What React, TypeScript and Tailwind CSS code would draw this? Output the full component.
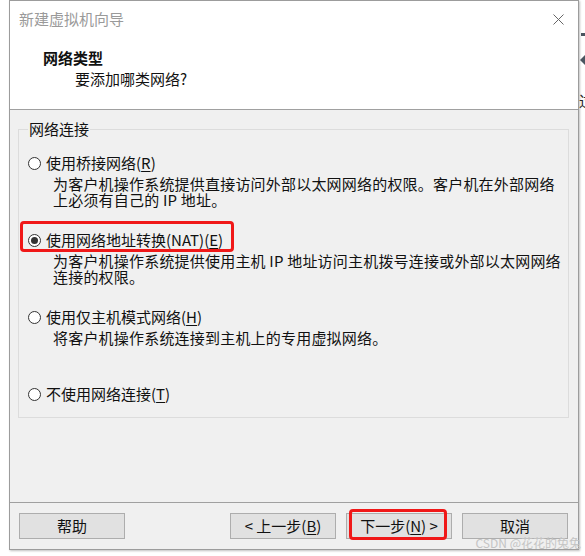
import React from 'react';

const U = ({ k }: { k: string }) => (
  <>
    (<span className="underline underline-offset-2">{k}</span>)
  </>
);

const Radio = ({ checked = false }: { checked?: boolean }) => (
  <span className="w-[13px] h-[13px] rounded-full border border-[#333] bg-white flex items-center justify-center shrink-0">
    {checked && <span className="w-[7px] h-[7px] rounded-full bg-[#333]" />}
  </span>
);

interface OptionProps {
  label: React.ReactNode;
  lines?: string[];
  checked?: boolean;
}

const Option = ({ label, lines = [], checked }: OptionProps) => (
  <div className="h-[77px]">
    <div className="flex items-center gap-[5px] h-[18px] leading-[18px]">
      <Radio checked={checked} />
      <span>{label}</span>
    </div>
    {lines.length > 0 && (
      <div className="mt-[4px] pl-[25px] leading-[16px] whitespace-nowrap tracking-[0.2px]">
        {lines.map((l, i) => (
          <div key={i}>{l}</div>
        ))}
      </div>
    )}
  </div>
);

const Btn = ({ children }: { children: React.ReactNode }) => (
  <div className="w-[106px] h-[26px] bg-[#e1e1e1] border border-[#adadad] flex items-center justify-center leading-[18px]">
    {children}
  </div>
);

export default function App() {
  return (
    <div className="w-[585px] h-[556px] bg-white relative overflow-hidden text-[15px] text-[#111] font-['Noto_Sans_CJK_SC',sans-serif]">
      <div className="ml-[9px] w-[570px] h-[550px] border border-[#9c9c9c] flex flex-col bg-[#f0f0f0] shadow-[1px_1px_2px_rgba(0,0,0,0.25)]">
        {/* header */}
        <div className="h-[109px] bg-white border-b border-[#a0a0a0] shrink-0">
          <div className="h-[36px] flex items-center pl-[9px] pr-[14px]">
            <span className="text-[#9a9a9a]">新建虚拟机向导</span>
            <svg className="ml-auto" width="11" height="11" viewBox="0 0 11 11">
              <path d="M0.5 0.5 L10.5 10.5 M10.5 0.5 L0.5 10.5" stroke="#666" strokeWidth="1" />
            </svg>
          </div>
          <div className="mt-[11px] pl-[33px] leading-[20px] font-bold">网络类型</div>
          <div className="mt-[1px] pl-[65px] leading-[20px]">要添加哪类网络?</div>
        </div>

        {/* body */}
        <div className="flex-1">
          <div className="mt-[19px] ml-[8px] w-[551px] h-[289px] border border-[#dcdcdc] relative pl-[9px] pt-[24px]">
            <span className="absolute left-[9px] top-[-10px] px-[1px] bg-[#f0f0f0] leading-[18px]">网络连接</span>
            <Option
              label={<>使用桥接网络<U k="R" /></>}
              lines={[
                '为客户机操作系统提供直接访问外部以太网网络的权限。客户机在外部网络',
                '上必须有自己的 IP 地址。',
              ]}
            />
            <Option
              checked
              label={<>使用网络地址转换(NAT)<U k="E" /></>}
              lines={[
                '为客户机操作系统提供使用主机 IP 地址访问主机拨号连接或外部以太网网络',
                '连接的权限。',
              ]}
            />
            <Option
              label={<>使用仅主机模式网络<U k="H" /></>}
              lines={['将客户机操作系统连接到主机上的专用虚拟网络。']}
            />
            <Option label={<>不使用网络连接<U k="T" /></>} />
          </div>
        </div>

        {/* footer */}
        <div className="h-[47px] border-t border-[#a0a0a0] shrink-0 flex items-start pt-[10px] pl-[9px] pr-[10px]">
          <Btn>帮助</Btn>
          <div className="ml-auto flex gap-[10px]">
            <Btn>&lt; 上一步<U k="B" /></Btn>
            <Btn>下一步<U k="N" /> &gt;</Btn>
            <Btn>取消</Btn>
          </div>
        </div>
      </div>

      {/* red annotation boxes */}
      <div className="absolute left-[20px] top-[221px] w-[214px] h-[31px] border-[3px] border-[#f01818] rounded-[4px]" />
      <div className="absolute left-[349px] top-[509px] w-[98px] h-[31px] border-[3px] border-[#f01818] rounded-[4px]" />

      {/* bits of the window behind */}
      <div className="absolute left-[581px] top-[33px] w-[4px] h-[3px] bg-[#4a5560]" />
      <svg className="absolute left-[579px] top-[55px]" width="6" height="10" viewBox="0 0 6 10">
        <path d="M6 0 L1 5 L6 10 Z" fill="#4a5560" />
      </svg>
      <span className="absolute left-[579px] top-[92px] text-[15px] leading-[18px] text-[#222]">过</span>

      {/* watermark */}
      <span className="absolute right-[4px] top-[535px] text-[12px] leading-[16px] whitespace-nowrap text-[#c4c4c4]">
        CSDN @花花的兔兔
      </span>
    </div>
  );
}
